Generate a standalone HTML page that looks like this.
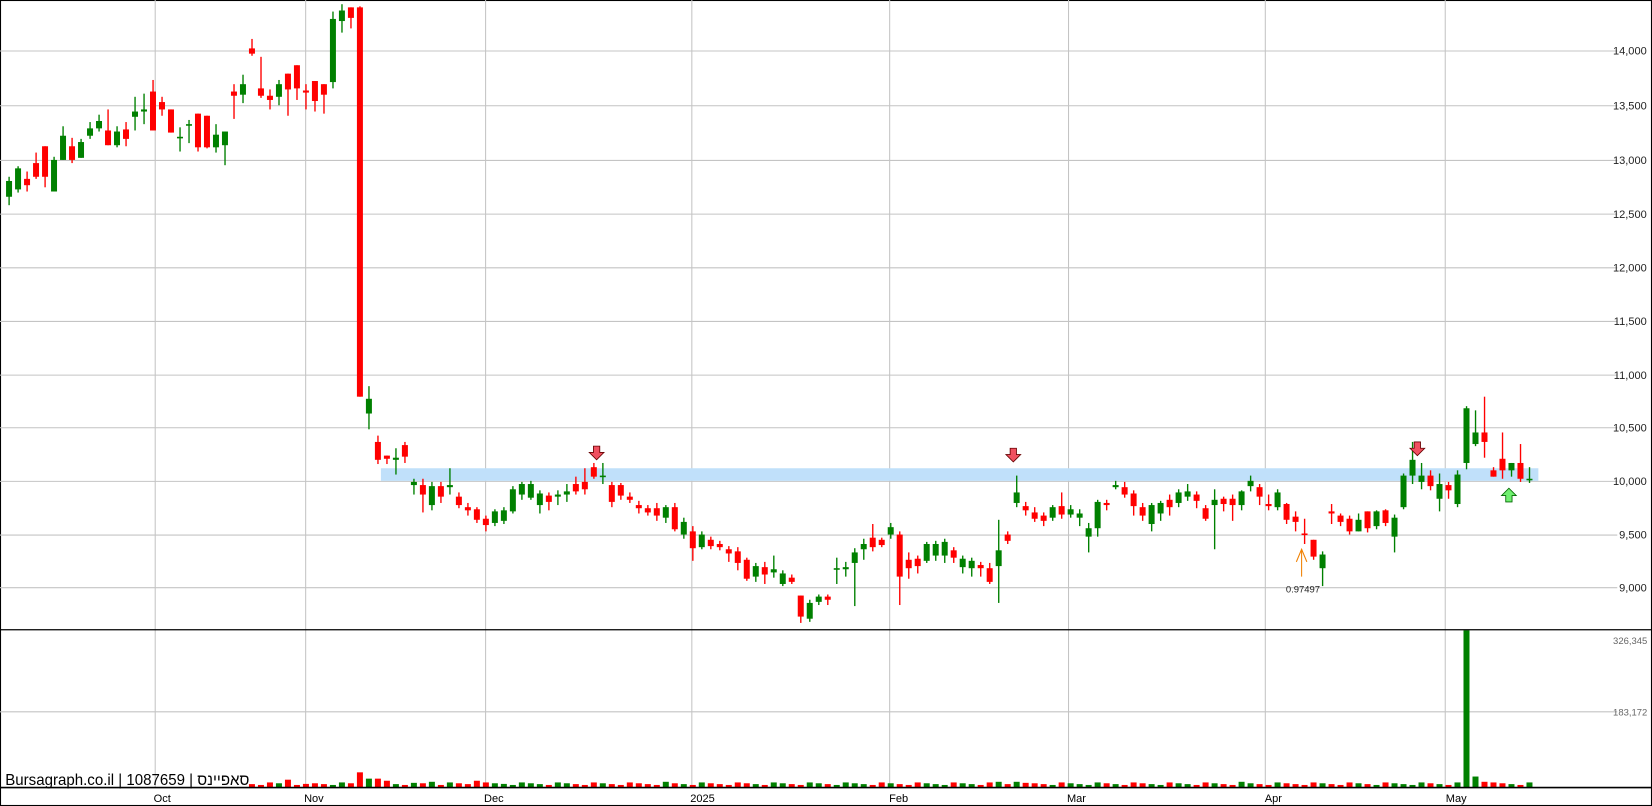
<!DOCTYPE html>
<html><head><meta charset="utf-8"><style>
html,body{margin:0;padding:0;background:#fff;overflow:hidden}
svg{display:block}
text{font-family:"Liberation Sans",Arial,sans-serif}
</style></head><body>
<svg id="s" width="1652" height="806" viewBox="0 0 1570 766" preserveAspectRatio="none" xmlns="http://www.w3.org/2000/svg">
<rect x="0.5" y="0.5" width="1569" height="765" fill="#fff" stroke="#000" stroke-width="1"/>
<g id="grid" stroke="#c4c4c4" stroke-width="1"></g>
<rect x="362" y="445" width="1100" height="12" fill="#c0e0fa"/>
<g id="vol"></g>
<g id="cd"></g>
<line x1="0" y1="598.5" x2="1570" y2="598.5" stroke="#000" stroke-width="1.2"/>
<line x1="0" y1="748.5" x2="1570" y2="748.5" stroke="#000" stroke-width="1.5"/>
<g id="ax" font-size="10.5" fill="#222"></g>
<g font-size="10.5" fill="#000">
<text x="146" y="762">Oct</text><text x="289" y="762">Nov</text><text x="460" y="762">Dec</text>
<text x="656" y="762">2025</text><text x="845" y="762">Feb</text><text x="1014" y="762">Mar</text>
<text x="1202" y="762">Apr</text><text x="1374" y="762">May</text>
</g>
<text x="1533" y="612" font-size="9" fill="#666">326,345</text>
<text x="1533" y="680" font-size="9" fill="#666">183,172</text>
<text x="5" y="746" font-size="15" fill="#000" textLength="232" lengthAdjust="spacingAndGlyphs">Bursagraph.co.il | 1087659 | סאפיינס</text>
<text x="1222" y="563" font-size="9" fill="#222">0.97497</text>
<g stroke="#f08000" stroke-width="1" fill="none">
<line x1="1237" y1="522" x2="1237" y2="548"/><path d="M1232 534 L1237 522 L1242 534"/>
</g>
<g id="arr"></g>
</svg>
<script>
var NS="http://www.w3.org/2000/svg";
function el(p,t,a){var e=document.createElementNS(NS,t);for(var k in a)e.setAttribute(k,a[k]);p.appendChild(e);return e;}
var g=document.getElementById('grid');
[48,100,152,203,254,305,356,406,457,508,558,676].forEach(function(y){el(g,'line',{x1:0,y1:y+.5,x2:1537,y2:y+.5});});
[147,290,461,657,845,1015,1202,1373].forEach(function(x){el(g,'line',{x1:x+.5,y1:0,x2:x+.5,y2:748});});
var ax=document.getElementById('ax');
var labs=["14,000","13,500","13,000","12,500","12,000","11,500","11,000","10,500","10,000","9,500","9,000"];
[48,100,152,203,254,305,356,406,457,508,558].forEach(function(y,i){
 var t=el(ax,'text',{x:1565,y:y+4,'text-anchor':'end'});t.textContent=labs[i];});
var D=[
[172,187,168,195,'G'],[160,180,158,183,'G'],[170,176,163,182,'R'],[155,168,145,170,'R'],[139,168,139,178,'R'],
[152,182,149,182,'G'],[129,152,120,152,'G'],[139,152,131,155,'R'],[135,150,132,150,'G'],[122,129,116,132,'G'],
[115,122,109,125,'G'],[124,138,104,138,'R'],[125,138,120,140,'G'],[123,132,116,139,'R'],[106,111,92,124,'G'],
[104,106,89,118,'G'],[87,124,76,124,'R'],[97,104,92,110,'R'],[104,126,104,126,'R'],[130,131,121,144,'G'],
[118,119,114,136,'G'],[108,140,108,144,'R'],[110,140,110,141,'R'],[128,140,118,145,'G'],[125,138,125,157,'G'],
[87,91,80,113,'R'],[80,90,71,98,'G'],[46,51,37,53,'R'],[84,91,54,93,'R'],[91,95,85,104,'R'],
[80,92,76,100,'G'],[70,85,70,110,'R'],[62,84,62,95,'R'],[86,88,80,104,'R'],[77,96,77,106,'R'],
[80,90,80,108,'R'],[18,78,11,84,'G'],[10,20,4,31,'G'],[7,17,7,27,'R'],[7,377,6,377,'R'],
[379,393,367,408,'G'],[420,437,414,441,'R'],[433,436,433,441,'R'],[435,437,426,451,'G'],[423,434,420,440,'R'],
[458,461,455,470,'G'],[461,470,455,487,'R'],[462,480,458,485,'G'],[462,472,458,478,'R'],[461,463,445,470,'G'],
[472,480,468,483,'R'],[482,485,478,490,'R'],[484,494,482,497,'R'],[493,499,490,505,'R'],[486,497,484,500,'G'],
[485,495,482,498,'G'],[465,486,462,488,'G'],[460,470,458,475,'G'],[460,473,457,475,'G'],[469,480,466,488,'G'],
[471,477,468,485,'R'],[470,472,466,480,'G'],[467,470,460,477,'G'],[460,467,453,470,'R'],[458,465,445,470,'R'],
[444,453,440,455,'R'],[452,453,440,460,'G'],[461,477,458,482,'R'],[461,471,459,475,'R'],[472,475,468,478,'R'],
[480,483,476,488,'R'],[483,487,480,490,'R'],[483,490,478,495,'R'],[482,492,480,497,'G'],[482,503,478,505,'R'],
[496,508,492,512,'G'],[505,521,500,533,'R'],[508,520,505,522,'G'],[513,519,510,522,'R'],[517,520,514,523,'R'],
[522,526,519,534,'R'],[524,535,520,542,'R'],[532,550,530,552,'R'],[538,548,535,553,'G'],[539,546,534,555,'R'],
[541,544,528,549,'G'],[545,555,542,557,'G'],[549,553,546,555,'R'],[566,586,566,592,'R'],[573,588,570,591,'G'],
[567,572,565,575,'G'],[567,570,565,575,'R'],[540,541,530,555,'G'],[539,541,534,548,'G'],[525,535,521,576,'G'],
[517,522,512,532,'G'],[511,520,498,524,'R'],[513,518,511,520,'R'],[501,508,497,512,'G'],[508,548,505,575,'R'],
[532,540,525,550,'R'],[531,538,528,545,'R'],[517,533,515,535,'G'],[517,528,514,533,'G'],[515,528,512,535,'G'],
[523,530,520,535,'R'],[531,539,528,545,'G'],[533,540,530,548,'G'],[537,540,534,548,'R'],[540,553,535,555,'R'],
[523,538,494,573,'G'],[508,514,505,517,'R'],[468,478,452,482,'G'],[481,485,477,490,'R'],[487,493,482,496,'R'],
[490,495,487,500,'R'],[482,492,480,495,'G'],[481,489,468,493,'R'],[484,489,480,492,'G'],[488,492,484,500,'G'],
[502,510,497,525,'G'],[477,502,475,510,'G'],[478,480,475,485,'R'],[461,463,457,465,'G'],[463,470,458,473,'R'],
[469,481,466,490,'R'],[482,490,478,495,'R'],[480,498,478,505,'G'],[478,488,476,495,'G'],[475,482,470,490,'R'],
[468,478,465,482,'G'],[467,472,460,476,'G'],[470,476,467,483,'R'],[483,493,480,495,'R'],[475,480,465,522,'G'],
[474,479,472,486,'R'],[474,480,470,495,'R'],[467,480,466,485,'G'],[457,462,452,467,'G'],[463,472,460,480,'R'],
[479,481,470,485,'R'],[468,482,465,485,'G'],[479,494,478,498,'R'],[491,496,486,505,'R'],[507,508,493,517,'R'],
[513,529,513,532,'R'],[527,540,524,557,'G'],[486,488,479,498,'R'],[490,496,488,500,'R'],[493,505,490,508,'R'],
[494,505,488,505,'G'],[486,502,486,506,'R'],[486,500,485,503,'G'],[485,497,484,500,'R'],[492,510,489,525,'G'],
[452,482,450,484,'G'],[437,452,420,460,'G'],[452,458,440,465,'G'],[452,462,447,466,'R'],[460,474,450,486,'G'],
[461,466,458,474,'R'],[451,479,447,482,'G'],[388,440,386,446,'G'],[411,422,390,424,'G'],[411,420,377,435,'R'],
[447,453,444,453,'R'],[436,447,411,455,'R'],[440,447,440,453,'G'],[440,455,422,458,'R'],[455,456,444,459,'G']
];
var cd=document.getElementById('cd'),vol=document.getElementById('vol');
var big={39:14,40:8,41:8,42:6,31:7,52:6,45:4,47:5,73:5,110:5,112:5,113:4,137:5,163:10,164:5,162:149,33:3,55:3};
D.forEach(function(d,i){
 var x=8.6+8.55*i,c=d[4]=='G'?'#008000':'#ff0000';
 el(cd,'rect',{x:x-0.6,y:d[2],width:1.3,height:Math.max(1,d[3]-d[2]),fill:c});
 el(cd,'rect',{x:x-2.85,y:d[0],width:5.7,height:Math.max(1.5,d[1]-d[0]),fill:c});
 if(x>238){var h=big[i]||(2+((i*7)%4)*0.8);
  el(vol,'rect',{x:x-2.85,y:748-h,width:5.7,height:h,fill:c});}
});
var arr=document.getElementById('arr');
function down(x,y){el(arr,'path',{d:'M'+(x-3)+' '+(y-7)+'h6v6h4l-7 7l-7-7h4z',fill:'#f05060',stroke:'#600',"stroke-width":0.8});}
down(567,431);down(963,433);down(1347,427);
var x=1434,y=470;
el(arr,'path',{d:'M'+(x-3)+' '+(y+7)+'h6v-6h4l-7-7l-7 7h4z',fill:'#70f070',stroke:'#060',"stroke-width":0.8});
</script>
</body></html>
